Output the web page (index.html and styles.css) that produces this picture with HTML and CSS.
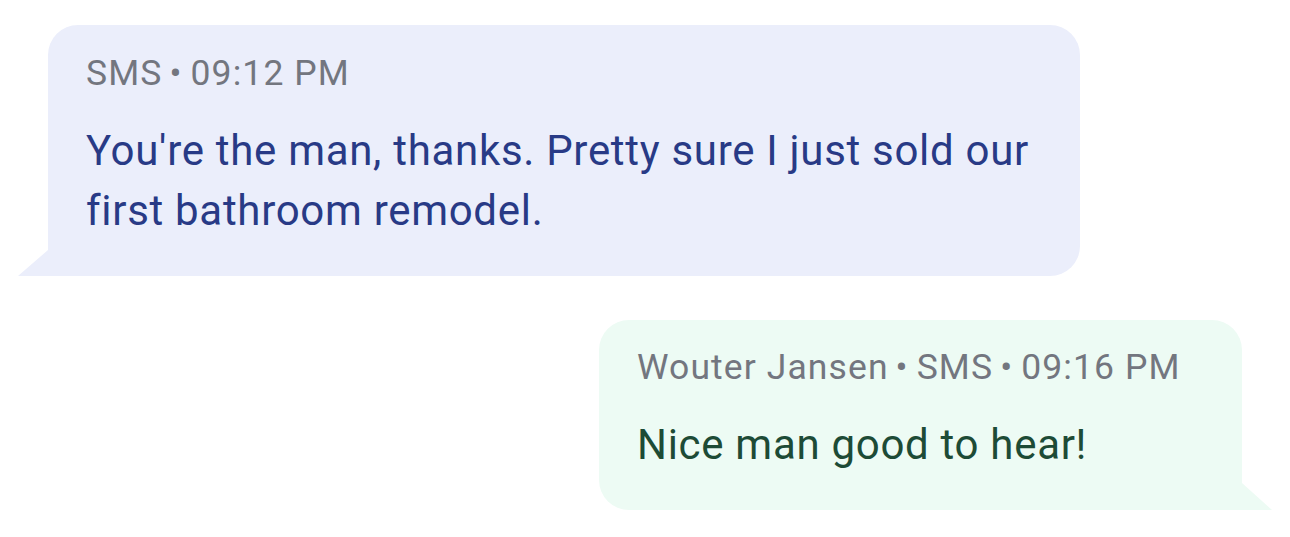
FILE: index.html
```html
<!DOCTYPE html>
<html>
<head>
<meta charset="utf-8">
<link rel="stylesheet" href="styles.css">
</head>
<body>
<div class="thread">
  <div class="bubble incoming">
    <div class="meta">SMS<span class="dot">•</span>09:12 PM</div>
    <div class="text">You're the man, thanks. Pretty sure I just sold our first bathroom remodel.</div>
  </div>
  <div class="bubble outgoing">
    <div class="meta">Wouter Jansen<span class="dot">•</span>SMS<span class="dot">•</span>09:16 PM</div>
    <div class="text">Nice man good to hear!</div>
  </div>
</div>
</body>
</html>
```
FILE: styles.css
```css
html, body {
  margin: 0;
  padding: 0;
  background: #ffffff;
}
body {
  font-family: Roboto, "Noto Sans", sans-serif;
}
.thread {
  display: flex;
  flex-direction: column;
  gap: 44px;
  padding-top: 25px;
}
.bubble {
  position: relative;
  box-sizing: border-box;
  border-radius: 30px;
}
.incoming {
  margin-left: 48px;
  width: 1032px;
  height: 251px;
  background: #ebeefb;
  border-bottom-left-radius: 0;
  padding: 26px 38px 0 38px;
}
.incoming::before {
  content: "";
  position: absolute;
  left: -30px;
  bottom: 0;
  width: 30px;
  height: 26px;
  background: #ebeefb;
  clip-path: polygon(100% 0, 100% 100%, 0 100%);
}
.outgoing {
  margin-left: 599px;
  width: 643px;
  height: 190px;
  background: #edfbf4;
  border-bottom-right-radius: 0;
  padding: 25px 38px 0 38px;
}
.outgoing::after {
  content: "";
  position: absolute;
  right: -30px;
  bottom: 0;
  width: 30px;
  height: 27px;
  background: #edfbf4;
  clip-path: polygon(0 0, 100% 100%, 0 100%);
}
.meta {
  font-size: 35.5px;
  line-height: 44px;
  color: #73767f;
  letter-spacing: 1.1px;
}
.dot {
  margin: 0 8px 0 7px;
}
.text {
  margin-top: 26px;
  font-size: 42px;
  line-height: 60px;
  letter-spacing: 0.7px;
}
.incoming .text {
  color: #283a86;
}
.outgoing .text {
  color: #1d4b36;
}
```
